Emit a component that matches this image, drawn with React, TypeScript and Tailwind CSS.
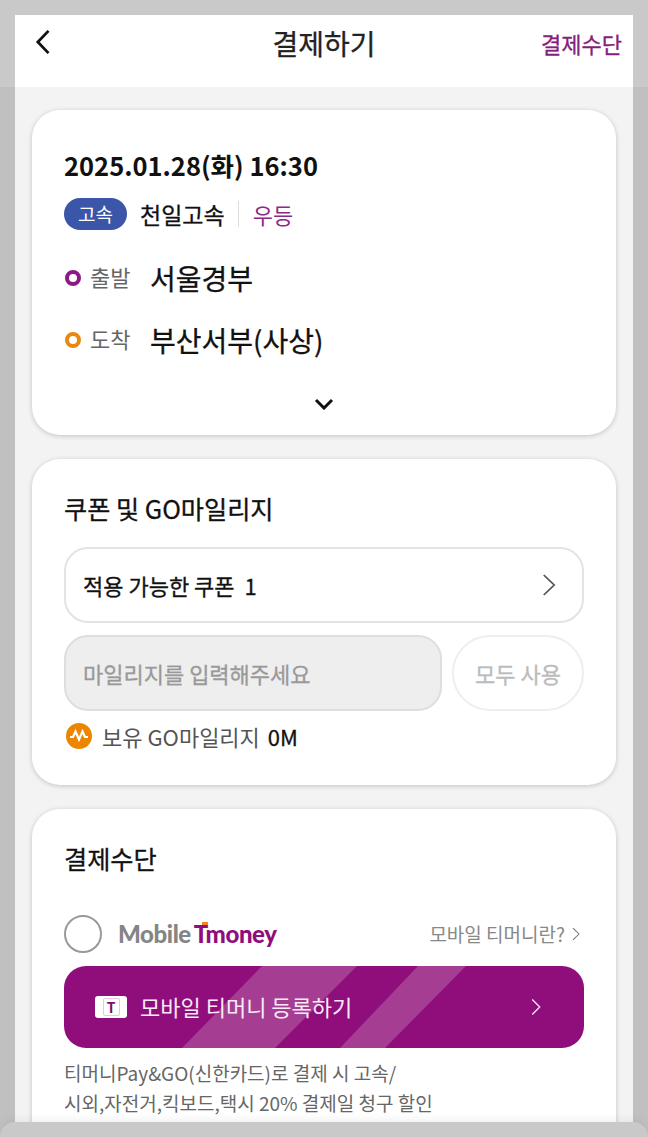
const kr = "font-['Noto_Sans_CJK_KR','Noto_Sans',sans-serif]";
const semi = "[-webkit-text-stroke:0.3px_currentColor]";

function Chevron({ className, sw = 2 }: { className: string; sw?: number }) {
  return (
    <svg viewBox="0 0 12 24" fill="none" preserveAspectRatio="none" className={className}>
      <path d="M1.5 2 L10.5 12 L1.5 22" stroke="currentColor" strokeWidth={sw} />
    </svg>
  );
}

function Card({ className, children }: { className: string; children: React.ReactNode }) {
  return (
    <section className={`rounded-[28px] bg-white px-8 shadow-[0_1px_5px_rgba(0,0,0,0.2)] ${className}`}>
      {children}
    </section>
  );
}

function RouteRow({ dot, label, place }: { dot: string; label: string; place: string }) {
  return (
    <div className="flex h-[30px] items-center">
      <span className={`ml-px h-4 w-4 rounded-full border-[4px] ${dot}`} />
      <span className="ml-[9px] w-[60px] pb-[4px] text-[22px] text-[#666]">{label}</span>
      <span className={`text-[28px] text-[#111] ${semi}`}>{place}</span>
    </div>
  );
}

export default function App() {
  return (
    <div className={`${kr} relative h-[1137px] w-[648px] overflow-hidden bg-[linear-gradient(#c9c9c9_87px,#c0c0c0_87px)] px-[15px] pt-[15px]`}>
      <div className="h-full bg-[#f3f3f3]">
        <header className="flex h-[72px] items-start bg-white px-[11px] pt-[6px]">
          <div className="flex-1">
            <svg viewBox="0 0 16 28" fill="none" className="ml-[8px] mt-[8px] h-[26px] w-[16px] text-[#111]">
              <path d="M15 2 L3.5 14 L15 26" stroke="currentColor" strokeWidth="3" />
            </svg>
          </div>
          <h1 className={`text-[28px] leading-[44px] text-[#222] ${semi}`}>결제하기</h1>
          <div className="flex-1 text-right">
            <a className={`text-[22px] leading-[44px] text-[#84207c] ${semi}`}>결제수단</a>
          </div>
        </header>

        <div className="flex flex-col gap-6 px-[17px] pt-[23px]">
          <Card className="h-[325px] pt-[36px]">
            <p className="text-[25.5px] font-bold leading-[38px] text-[#111]">2025.01.28(화) 16:30</p>
            <div className="mt-[14px] flex h-8 items-center">
              <span className="flex h-8 w-[63px] items-center justify-center rounded-full bg-[#3b55a8] text-[19px] text-white">고속</span>
              <span className={`ml-[13px] text-[23px] text-[#111] ${semi}`}>천일고속</span>
              <span className="ml-[13px] mr-[14px] h-[26px] w-px bg-[#ddd]" />
              <span className="text-[22px] text-[#8c2a88]">우등</span>
            </div>
            <div className="mt-[33px] flex flex-col gap-[32px]">
              <RouteRow dot="border-[#8b1a84]" label="출발" place="서울경부" />
              <RouteRow dot="border-[#e8890f]" label="도착" place="부산서부(사상)" />
            </div>
            <div className="mt-[43px] flex justify-center">
              <svg viewBox="0 0 20 12" fill="none" className="h-3 w-5 text-[#111]">
                <path d="M2 2 L10 10 L18 2" stroke="currentColor" strokeWidth="3" />
              </svg>
            </div>
          </Card>

          <Card className="h-[326px] pt-[30px]">
            <h2 className={`text-[25.2px] leading-[38px] text-[#111] ${semi}`}>쿠폰 및 GO마일리지</h2>
            <div className="mt-[20px] flex h-[76px] items-center justify-between rounded-[24px] border-2 border-[#e3e3e3] pl-[17px] pr-[26px]">
              <span className={`text-[22px] text-[#111] ${semi}`}>적용 가능한 쿠폰&nbsp; 1</span>
              <Chevron className="h-[24px] w-[14px] text-[#555]" sw={1.5} />
            </div>
            <div className="mt-[12px] flex gap-[10px]">
              <div className={`flex h-[76px] w-[378px] items-center rounded-[24px] border-2 border-[#dedede] bg-[#eeeeee] pl-[17px] text-[22px] text-[#999] ${semi}`}>
                마일리지를 입력해주세요
              </div>
              <div className={`flex h-[76px] flex-1 items-center justify-center rounded-full border-2 border-[#eeeeee] text-[22px] text-[#bbb] ${semi}`}>
                모두 사용
              </div>
            </div>
            <div className="mt-[6px] flex h-[38px] items-center">
              <svg viewBox="0 0 26 26" className="ml-[2px] h-[26px] w-[26px]">
                <circle cx="13" cy="13" r="13" fill="#ec8600" />
                <path d="M4 14 H7 L9.5 8.5 L13 16.5 L16.5 8.5 L19 14 H22" fill="none" stroke="#fff" strokeWidth="2.2" />
              </svg>
              <span className="ml-[10px] text-[22px] text-[#555]">보유 GO마일리지</span>
              <span className={`ml-[8px] text-[22px] text-[#111] ${semi}`}>0M</span>
            </div>
          </Card>

          <Card className="h-[400px] pt-[30px]">
            <h2 className={`text-[25.2px] leading-[38px] text-[#111] ${semi}`}>결제수단</h2>
            <div className="mt-[38px] flex h-[38px] items-center">
              <span className="h-[38px] w-[38px] rounded-full border-2 border-[#999]" />
              <span className="ml-[16px] flex items-baseline font-['Lato',sans-serif] text-[24px] font-black tracking-[-0.4px]">
                <span className="text-[#858585]">Mobile</span>
                <span className="relative ml-[3px] text-[#8f0d7c]">
                  Tmoney
                  <span className="absolute left-[8px] top-[6px] h-[3px] w-[6px] bg-[#ef8a1a]" />
                </span>
              </span>
              <span className="ml-auto text-[19px] text-[#888]">모바일 티머니란?</span>
              <Chevron className="ml-[7px] mr-[4px] h-[14px] w-[8px] text-[#777]" sw={1.6} />
            </div>
            <div className="relative mt-[13px] flex h-[82px] items-center overflow-hidden rounded-[22px] bg-[#900d7c] pl-[31px] pr-[43px]">
              <svg viewBox="0 0 520 82" className="absolute inset-0 h-full w-full">
                <polygon points="198,0 293,0 211,82 118,82" fill="#a53e92" />
                <polygon points="354,0 402,0 321,82 276,82" fill="#a53e92" />
              </svg>
              <span className="relative flex h-[22px] w-[32px] items-center justify-center rounded-[3px] bg-white">
                <span className="flex h-[18px] w-[17px] items-center justify-center rounded-[2px] border border-[#e6c8e0] text-[14px] font-bold leading-none text-[#7a0f6c]">T</span>
              </span>
              <span className="relative ml-[13px] pb-[2px] text-[22px] text-[#fbeaf7]">모바일 티머니 등록하기</span>
              <Chevron className="relative ml-auto h-[18px] w-[10px] text-[#fbeaf7]" sw={1.6} />
            </div>
            <p className="mt-[10px] text-[19px] leading-[30px] text-[#666]">
              티머니Pay&GO(신한카드)로 결제 시 고속/
              <br />
              시외,자전거,킥보드,택시 20% 결제일 청구 할인
            </p>
          </Card>
        </div>
      </div>
      <div className="absolute inset-x-0 bottom-0 h-[15px] rounded-t-[28px] bg-[#c9c9c9] shadow-[0_-3px_8px_rgba(0,0,0,0.05)]" />
    </div>
  );
}
